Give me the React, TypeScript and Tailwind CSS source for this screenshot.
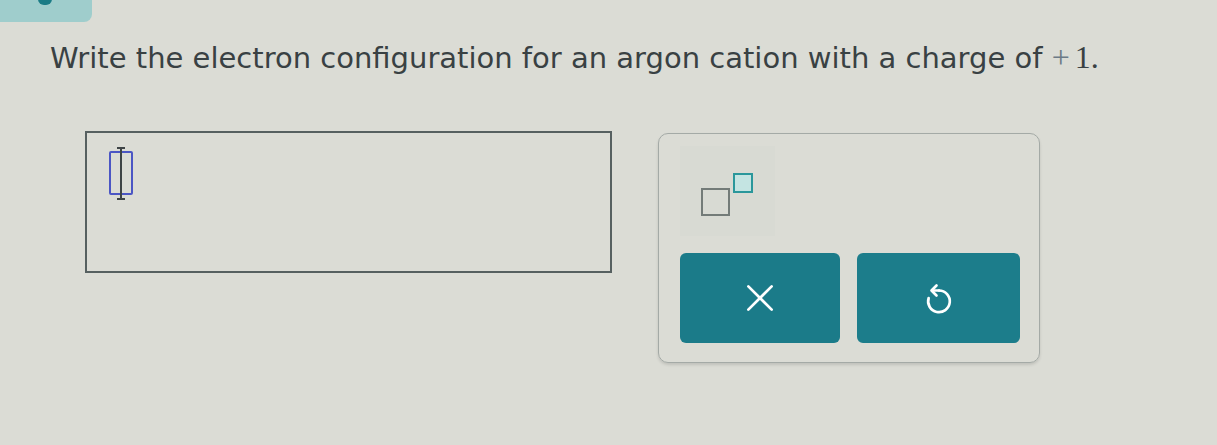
import React from 'react';

function CursorSlot() {
  // empty answer slot with an I-beam cursor
  return (
    <div className="relative w-[24px] h-[44px]">
      <div className="absolute inset-0 border-2 border-[#4b56c4] rounded-[2px]" />
      <div className="absolute left-[11px] top-[-3px] w-[2px] h-[50px] bg-[#3e4446]" />
      <div className="absolute left-[8px] top-[-4px] w-[8px] h-[2px] bg-[#3e4446]" />
      <div className="absolute left-[8px] bottom-[-5px] w-[8px] h-[2px] bg-[#3e4446]" />
    </div>
  );
}

function SuperscriptIcon() {
  return (
    <div className="relative w-[54px] h-[44px]">
      <div className="absolute left-0 top-[15px] w-[29px] h-[28px] border-2 border-[#737b78]" />
      <div className="absolute left-[32px] top-0 w-[20px] h-[20px] border-2 border-[#2a979b] bg-[#c4e4e2]" />
    </div>
  );
}

function UndoIcon() {
  return (
    <svg viewBox="0 0 24 24" className="w-[40px] h-[40px]" fill="none" stroke="white" strokeWidth={1.6} strokeLinecap="round" strokeLinejoin="round">
      <path d="M12 7.5 A6.5 6.5 0 1 1 5.8 12" />
      <path d="M12 7.5 H8" />
      <path d="M10.5 4.5 L7.5 7.5 L10.5 10.5" />
    </svg>
  );
}

function CloseIcon() {
  return (
    <svg viewBox="0 0 24 24" className="w-[40px] h-[40px]" fill="none" stroke="white" strokeWidth={1.6} strokeLinecap="round">
      <path d="M5 5 L19 19" />
      <path d="M19 5 L5 19" />
    </svg>
  );
}

export default function App() {
  return (
    <div className="relative w-full h-[445px] overflow-hidden bg-[#dbdcd5] font-['DejaVu_Sans',_sans-serif]">
      {/* header tab peeking in at the top */}
      <div className="absolute left-0 top-0 w-[92px] h-[22px] rounded-br-[8px] bg-[#9fcdcc]">
        <div className="absolute left-[38px] top-[-7px] w-[14px] h-[12px] rounded-full bg-[#1b7c86]" />
      </div>

      <div className="pt-[36px] pl-[50px]">
        <p className="text-[29px] leading-[42px] text-[#394143]">
          Write the electron configuration for an argon cation with a charge of{' '}
          <span className="font-['Liberation_Serif',_serif] text-[32px]">
            <span className="text-[#6c7a86] mr-[5px]">+</span>1.
          </span>
        </p>
      </div>

      <div className="flex items-start pl-[85px] pt-[52px] gap-[46px]">
        {/* answer input */}
        <div className="w-[527px] h-[142px] border-2 border-[#566060] pl-[22px] pt-[18px]">
          <CursorSlot />
        </div>

        {/* math keypad */}
        <div className="mt-[2px] w-[382px] h-[230px] rounded-[10px] border border-[#a4aaa6] shadow-[0_2px_3px_rgba(0,0,0,0.12)] pl-[21px] pr-[19px] pt-[12px]">
          <div className="w-[95px] h-[90px] bg-[#d8dad3] flex items-center justify-center pt-[8px]">
            <SuperscriptIcon />
          </div>
          <div className="flex gap-[17px] mt-[17px]">
            <button className="w-[160px] h-[90px] rounded-[6px] bg-[#1b7b89] flex items-center justify-center">
              <CloseIcon />
            </button>
            <button className="w-[163px] h-[90px] rounded-[6px] bg-[#1c7d8b] flex items-center justify-center">
              <UndoIcon />
            </button>
          </div>
        </div>
      </div>
    </div>
  );
}
